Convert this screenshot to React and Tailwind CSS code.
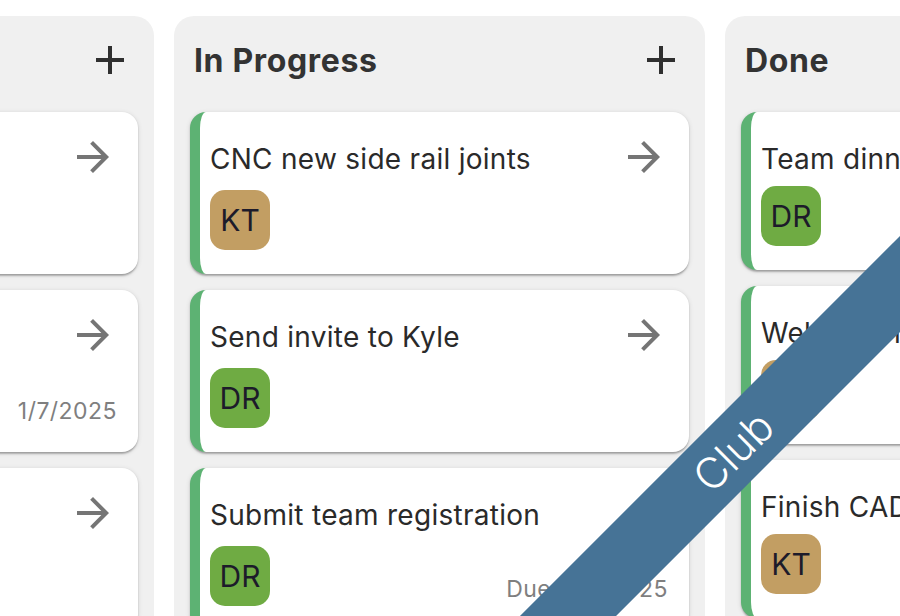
import React from "react";

const columns = [
  {
    title: "To Do",
    cards: [
      { title: "Order new wheels", who: "KT" },
      { title: "Book venue", who: "DR", due: "1/7/2025" },
      { title: "Print banners", who: "KT" },
    ],
  },
  {
    title: "In Progress",
    cards: [
      { title: "CNC new side rail joints", who: "KT" },
      { title: "Send invite to Kyle", who: "DR" },
      { title: "Submit team registration", who: "DR", due: "Due 1/15/2025" },
    ],
  },
  {
    title: "Done",
    done: true,
    cards: [
      { title: "Team dinner", who: "DR" },
      { title: "Welcome new members", who: "KT" },
      { title: "Finish CAD model", who: "KT" },
    ],
  },
];

const avatarColors = {
  KT: "bg-[#c29e63]",
  DR: "bg-[#6fab43]",
};

function ArrowIcon() {
  return (
    <svg viewBox="0 0 24 24" className="w-12 h-12 shrink-0 fill-[#757575]">
      <path d="M12 4l-1.41 1.41L16.17 11H4v2h12.17l-5.58 5.59L12 20l8-8z" />
    </svg>
  );
}

function PlusIcon() {
  return (
    <svg viewBox="0 0 24 24" className="w-12 h-12 shrink-0 fill-[#2f2f2f]">
      <path d="M19 13h-6v6h-2v-6H5v-2h6V5h2v6h6v2z" />
    </svg>
  );
}

function Avatar({ who }) {
  return (
    <div
      className={`w-[60px] h-[60px] rounded-[15px] flex items-center justify-center text-[30px] text-[#1d1b2a] ${avatarColors[who]}`}
    >
      {who}
    </div>
  );
}

function TaskCard({ card, arrow }) {
  return (
    <div className="bg-white rounded-2xl border-l-[10px] border-[#5db273] shadow-[0_3px_2px_-1px_rgba(0,0,0,0.2),0_1px_2px_0_rgba(0,0,0,0.14),0_1px_5px_0_rgba(0,0,0,0.12)] pt-[21px] pl-[10px] pr-[21px] pb-6">
      <div className="flex items-start justify-between">
        <div className="pt-2 text-[28px] leading-[36px] tracking-[0.01em] text-[#2a2a2a] whitespace-nowrap">
          {card.title}
        </div>
        {arrow && <ArrowIcon />}
      </div>
      <div className="mt-[9px] flex items-end justify-between">
        <Avatar who={card.who} />
        {card.due && (
          <span className="text-[23px] leading-[34px] tracking-[0.02em] text-[#7f7f7f]">
            {card.due}
          </span>
        )}
      </div>
    </div>
  );
}

function Column({ col }) {
  return (
    <div className="w-[531px] shrink-0 h-[700px] rounded-[20px] bg-[#f0f0f0] flex flex-col">
      <div className="flex items-center justify-between pl-[20px] pr-5 pt-5 pb-7">
        <h2 className="pt-[2px] text-[32px] leading-[46px] font-bold tracking-[0.02em] text-[#333333]">
          {col.title}
        </h2>
        {!col.done && <PlusIcon />}
      </div>
      <div className="flex flex-col gap-4 px-4">
        {col.cards.map((card) => (
          <TaskCard key={card.title} card={card} arrow={!col.done} />
        ))}
      </div>
    </div>
  );
}

export default function App() {
  return (
    <div className="relative w-full h-screen overflow-hidden bg-white font-['Inter',sans-serif]">
      <div className="flex gap-5 pt-4 -ml-[377px]">
        {columns.map((col) => (
          <Column key={col.title} col={col} />
        ))}
      </div>
      {/* corner ribbon */}
      <div className="pointer-events-none absolute left-[283px] top-[417px] w-[900px] h-[68px] -rotate-45 bg-[#467396] flex items-center justify-center text-white text-[43px] font-light">
        Club
      </div>
    </div>
  );
}
